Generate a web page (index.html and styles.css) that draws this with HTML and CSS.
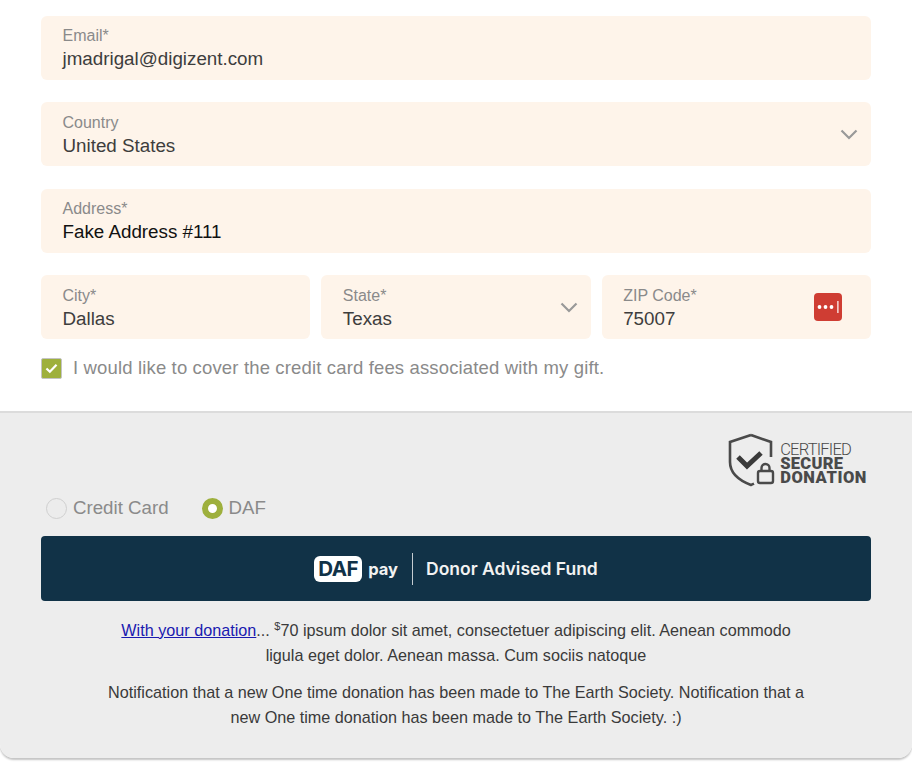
FILE: index.html
```html
<!DOCTYPE html>
<html lang="en">
<head>
<meta charset="utf-8">
<title>Donation</title>
<link rel="stylesheet" href="styles.css">
</head>
<body>
<main class="card">
  <section class="form">
    <div class="field"><span class="label">Email*</span><span class="value">jmadrigal@digizent.com</span></div>
    <div class="field has-icon">
      <div class="stack"><span class="label">Country</span><span class="value">United States</span></div>
      <svg class="chev" viewBox="0 0 18 11" width="18" height="11"><path d="M1.5 1.5 9 9l7.5-7.5" fill="none" stroke="#999" stroke-width="2.2"/></svg>
    </div>
    <div class="field"><span class="label">Address*</span><span class="value black">Fake Address #111</span></div>
    <div class="row">
      <div class="field"><span class="label">City*</span><span class="value">Dallas</span></div>
      <div class="field has-icon">
        <div class="stack"><span class="label">State*</span><span class="value">Texas</span></div>
        <svg class="chev" viewBox="0 0 18 11" width="18" height="11"><path d="M1.5 1.5 9 9l7.5-7.5" fill="none" stroke="#999" stroke-width="2.2"/></svg>
      </div>
      <div class="field has-icon zip">
        <div class="stack"><span class="label">ZIP Code*</span><span class="value">75007</span></div>
        <svg class="lp" viewBox="0 0 28 28" width="28" height="28"><rect width="28" height="28" rx="4" fill="#cf3d33"/><circle cx="5.5" cy="14" r="1.9" fill="#fff"/><circle cx="11.5" cy="14" r="1.9" fill="#fff"/><circle cx="17.5" cy="14" r="1.9" fill="#fff"/><rect x="23.3" y="8" width="1.2" height="12" fill="#fff"/></svg>
      </div>
    </div>
    <label class="fee">
      <span class="check"><svg viewBox="0 0 14 12" width="13" height="11"><path d="M1.5 6 5.2 9.6 12.5 1.8" fill="none" stroke="#fff" stroke-width="2.4"/></svg></span>
      <span>I would like to cover the credit card fees associated with my gift.</span>
    </label>
  </section>
  <section class="pay">
    <div class="badge">
      <svg class="shield" viewBox="0 0 48 54" width="48" height="54">
        <path d="M23 2 43 9v15" fill="none" stroke="#4a4a4a" stroke-width="2.6"/>
        <path d="M23 2 2 9v20c0 10 8 18 21 23 1-.3 2-.8 3-1.300" fill="none" stroke="#4a4a4a" stroke-width="2.6"/>
        <path d="M10 24l9 9 14-13" fill="none" stroke="#3a3a3a" stroke-width="5"/>
        <rect x="30" y="38" width="15" height="12" rx="2" fill="none" stroke="#4a4a4a" stroke-width="2.4"/>
        <path d="M33.500 38v-3a4 4 0 0 1 8 0v3" fill="none" stroke="#4a4a4a" stroke-width="2.4"/>
      </svg>
      <div class="badge-text"><span class="b1">CERTIFIED</span><span class="b2">SECURE</span><span class="b2 b3">DONATION</span></div>
    </div>
    <div class="methods">
      <span class="method"><span class="radio"></span>Credit Card</span>
      <span class="method"><span class="radio on"></span>DAF</span>
    </div>
    <div class="daf">
      <span class="daf-logo">DAF</span><span class="daf-pay">pay</span><span class="daf-sep"></span><span class="daf-text">Donor Advised Fund</span>
    </div>
    <p class="note"><a href="#">With your donation</a>... <sup>$</sup>70 ipsum dolor sit amet, consectetuer adipiscing elit. Aenean commodo<br>ligula eget dolor. Aenean massa. Cum sociis natoque</p>
    <p class="note second">Notification that a new One time donation has been made to The Earth Society. Notification that a<br>new One time donation has been made to The Earth Society. :)</p>
  </section>
</main>
</body>
</html>
```

FILE: styles.css
```css
* { box-sizing: border-box; }
html, body { margin: 0; padding: 0; background: #fff; }
body { font-family: "Liberation Sans", Arial, sans-serif; width: 912px; height: 762px; overflow: hidden; }
.card { height: 758px; border-radius: 0 0 14px 14px; box-shadow: 0 2px 2px #c4c4c4; overflow: hidden; display: flex; flex-direction: column; }
.form { padding: 16px 41px 0; display: flex; flex-direction: column; height: 411px; }
.field { background: #fef4ea; border-radius: 6px; height: 64px; margin-bottom: 22.400px; padding: 10.400px 21.500px 0; display: flex; flex-direction: column; flex: none; }
.field .label { font-size: 16px; line-height: 19px; color: #8a8a8a; }
.field .value { font-size: 18.800px; line-height: 26px; margin-top: 1px; color: #3d3d3d; }
.field .value.black { color: #111; }
.has-icon { flex-direction: row; justify-content: space-between; padding-right: 13px; }
.stack { display: flex; flex-direction: column; }
.chev { align-self: center; margin-top: -10px; }
.row { display: grid; grid-template-columns: repeat(3, 1fr); gap: 11px; }
.row .field { margin-bottom: 0; }
.zip { padding-right: 29px; }
.lp { align-self: center; margin-top: -11px; }
.fee { display: flex; align-items: center; gap: 11px; margin-top: 18px; font-size: 18.500px; line-height: 22px; color: #8a8a8a; letter-spacing: .15px; }
.check { width: 21px; height: 21px; background: #9eb03d; border: 1px solid #c4c4c4; border-radius: 2px; display: flex; align-items: center; justify-content: center; }
.pay { flex: 1; background: #ededed; border-top: 2px solid #dcdcdc; padding: 20px 41px 0; display: flex; flex-direction: column; }
.badge { align-self: flex-end; display: flex; align-items: center; gap: 4px; margin-right: 4px; height: 54px; }
.badge-text { display: flex; flex-direction: column; font-family: "Roboto", sans-serif; color: #4a4a4a; padding-top: 8px; }
.b1 { font-size: 16.500px; line-height: 14px; font-weight: 300; letter-spacing: -.8px; }
.b2 { font-size: 16.500px; line-height: 14px; font-weight: 900; letter-spacing: .3px; }
.b3 { letter-spacing: .55px; }
.methods { display: flex; gap: 33px; margin-top: 10px; font-size: 18.700px; line-height: 22px; color: #8a8a8a; padding-left: 5px; }
.method { display: flex; align-items: center; gap: 6px; }
.radio { width: 21px; height: 21px; border-radius: 50%; border: 1.500px solid #cfcfcf; background: #ececec; }
.radio.on { background: #fff; border: 6px solid #9eb03d; }
.daf { margin-top: 17px; height: 65px; background: #113247; border-radius: 4px; display: flex; align-items: center; justify-content: center; color: #f2f2f2; flex: none; }
.daf-logo { background: #fff; color: #113247; font-family: "Inter", sans-serif; font-weight: 700; font-size: 20.500px; line-height: 26px; width: 48px; text-align: center; border-radius: 6px; letter-spacing: -.5px; }
.daf-pay { font-family: "Inter", sans-serif; font-weight: 700; font-size: 16.500px; margin-left: 6px; }
.daf-sep { width: 1px; height: 32px; background: #c5ccd1; margin: 0 13px 0 14px; }
.daf-text { font-family: "Inter", sans-serif; font-weight: 600; font-size: 17.500px; }
.note { margin: 16.500px 0 0; text-align: center; font-size: 16.200px; line-height: 25.500px; color: #3a3a3a; }
.note.second { margin-top: 11px; }
.note a { color: #1a1ab0; text-decoration: underline; }
.note sup { font-size: 11px; line-height: 0; }
```
